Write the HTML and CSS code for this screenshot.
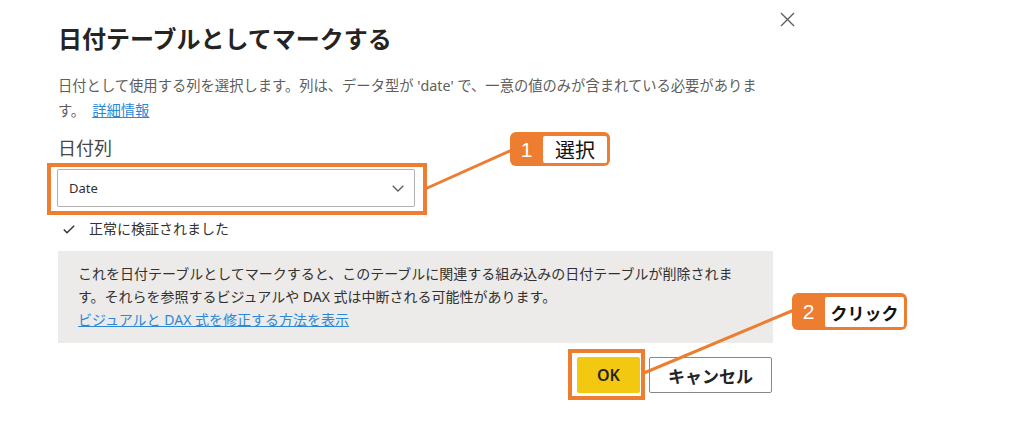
FILE: index.html
```html
<!DOCTYPE html>
<html lang="ja">
<head>
<meta charset="utf-8">
<title>日付テーブルとしてマークする</title>
<link rel="stylesheet" href="styles.css">
</head>
<body>
<div class="page">
  <div class="dialog">
    <header class="dlg-head">
      <h1 class="dlg-title">日付テーブルとしてマークする</h1>
      <button class="close" aria-label="閉じる">
        <svg width="15" height="15" viewBox="0 0 15 15"><path d="M1 1 L14 14 M14 1 L1 14" stroke="#605e5c" stroke-width="1.4" fill="none"/></svg>
      </button>
    </header>
    <p class="desc">日付として使用する列を選択します。列は、データ型が 'date' で、一意の値のみが含まれている必要があります。<a href="#" class="link desc-link">詳細情報</a></p>
    <div class="field-label">日付列</div>
    <div class="select-wrap">
      <div class="select">
        <span class="select-value">Date</span>
        <svg class="chev" width="12" height="7" viewBox="0 0 12 7"><path d="M0.7 0.7 L6 6 L11.3 0.7" stroke="#605e5c" stroke-width="1.3" fill="none"/></svg>
      </div>
      <div class="hl hl-select"></div>
    </div>
    <div class="valid">
      <svg width="12" height="9" viewBox="0 0 12 9"><path d="M0.8 4.6 L4 7.8 L11.2 0.8" stroke="#323130" stroke-width="1.4" fill="none"/></svg>
      <span>正常に検証されました</span>
    </div>
    <div class="warn">
      <p class="warn-text">これを日付テーブルとしてマークすると、このテーブルに関連する組み込みの日付テーブルが削除されます。それらを参照するビジュアルや DAX 式は中断される可能性があります。</p>
      <a href="#" class="link">ビジュアルと DAX 式を修正する方法を表示</a>
    </div>
    <div class="actions">
      <div class="ok-wrap">
        <button class="btn btn-ok">OK</button>
        <div class="hl hl-ok"></div>
      </div>
      <button class="btn btn-cancel">キャンセル</button>
    </div>
  </div>

  <svg class="leaders" width="1024" height="422" viewBox="0 0 1024 422">
    <line x1="425" y1="189" x2="512" y2="150" stroke="#ed7d31" stroke-width="3"/>
    <line x1="644" y1="373" x2="794" y2="310" stroke="#ed7d31" stroke-width="3"/>
  </svg>
  <div class="callout callout-1"><span class="callout-num">1</span><span class="callout-label">選択</span></div>
  <div class="callout callout-2"><span class="callout-num">2</span><span class="callout-label callout-label-bold">クリック</span></div>
</div>
</body>
</html>
```

FILE: styles.css
```css
* { box-sizing: border-box; }
html, body { margin: 0; padding: 0; background: #fff; }
body {
  font-family: "Noto Sans", "Noto Sans CJK JP", sans-serif;
  color: #323130;
}
.page {
  position: relative;
  width: 1024px;
  height: 422px;
  overflow: hidden;
}
.dialog {
  margin-left: 58px;
  width: 716px;
  padding-top: 12px;
}
.dlg-head {
  display: flex;
  justify-content: space-between;
  align-items: flex-start;
  margin-right: -21px;
}
.dlg-title {
  margin: 10px 0 0 0;
  font-family: "Noto Sans CJK JP", sans-serif;
  font-size: 24px;
  line-height: 32px;
  font-weight: 700;
  color: #252423;
}
.close {
  border: 0;
  background: none;
  padding: 0;
  width: 15px;
  height: 15px;
  display: block;
}
.close svg { display: block; }
.desc {
  margin: 19px 0 0 0;
  font-size: 14.3px;
  line-height: 25px;
  color: #605e5c;
}
.link {
  color: #2b88d8;
  text-decoration: underline;
}
.desc-link {
  display: inline-block;
  margin-left: 7px;
}
.field-label {
  margin-top: 13px;
  font-size: 18px;
  line-height: 24px;
  color: #484644;
}
.select-wrap {
  position: relative;
  margin-top: 9px;
  width: 358px;
  margin-left: -1px;
}
.select {
  height: 38px;
  border: 1px solid #b3b0ad;
  border-radius: 2px;
  display: flex;
  align-items: center;
  justify-content: space-between;
  padding: 0 10px 0 11px;
  font-size: 13px;
  color: #323130;
}
.chev { display: block; }
.hl {
  position: absolute;
  border: 4px solid #ed7d31;
  pointer-events: none;
}
.hl-select {
  left: -10px;
  right: -12px;
  top: -6px;
  bottom: -8px;
}
.valid {
  margin-top: 12px;
  display: flex;
  align-items: center;
  gap: 14px;
  padding-left: 5px;
  font-size: 14px;
  line-height: 20px;
  color: #323130;
}
.valid svg { display: block; }
.warn {
  margin-top: 12px;
  width: 715px;
  background: #edebe9;
  padding: 11px 20px 12px 20px;
  font-size: 14px;
  line-height: 23px;
  color: #323130;
}
.warn-text { margin: 0; }
.actions {
  margin-top: 14px;
  display: flex;
  justify-content: flex-end;
  gap: 9px;
  width: 714px;
}
.ok-wrap { position: relative; }
.btn {
  height: 36px;
  border-radius: 2px;
  font-family: "Noto Sans CJK JP", sans-serif;
  font-weight: 700;
  color: #252423;
  display: block;
}
.btn-ok {
  width: 63px;
  background: #f2c811;
  border: 1px solid #f2c811;
  font-family: "Noto Sans", sans-serif;
  font-weight: 600;
  font-size: 16px;
}
.btn-cancel {
  width: 123px;
  background: #fff;
  border: 1px solid #8a8886;
  font-size: 17px;
}
.hl-ok {
  left: -9px;
  right: -5px;
  top: -8px;
  bottom: -7px;
}
.leaders {
  position: absolute;
  left: 0;
  top: 0;
  pointer-events: none;
}
.callout {
  position: absolute;
  display: flex;
  align-items: stretch;
  background: #ed7d31;
  border-radius: 6px;
  padding: 4px 3px 3px 0;
  font-family: "Noto Sans CJK JP", sans-serif;
}
.callout-num {
  color: #fff;
  font-family: "Liberation Sans", sans-serif;
  font-size: 21px;
  display: flex;
  align-items: center;
  justify-content: center;
}
.callout-label {
  background: #fff;
  border-radius: 2px;
  color: #111;
  display: flex;
  align-items: center;
  justify-content: center;
}
.callout-1 {
  left: 510px;
  top: 132px;
  width: 100px;
  height: 34px;
}
.callout-1 .callout-num { width: 33px; }
.callout-1 .callout-label { width: 64px; font-size: 20px; }
.callout-2 {
  left: 792px;
  top: 293px;
  width: 115px;
  height: 37px;
}
.callout-2 .callout-num { width: 33px; }
.callout-2 .callout-label { width: 79px; font-size: 17px; font-weight: 700; }
```
